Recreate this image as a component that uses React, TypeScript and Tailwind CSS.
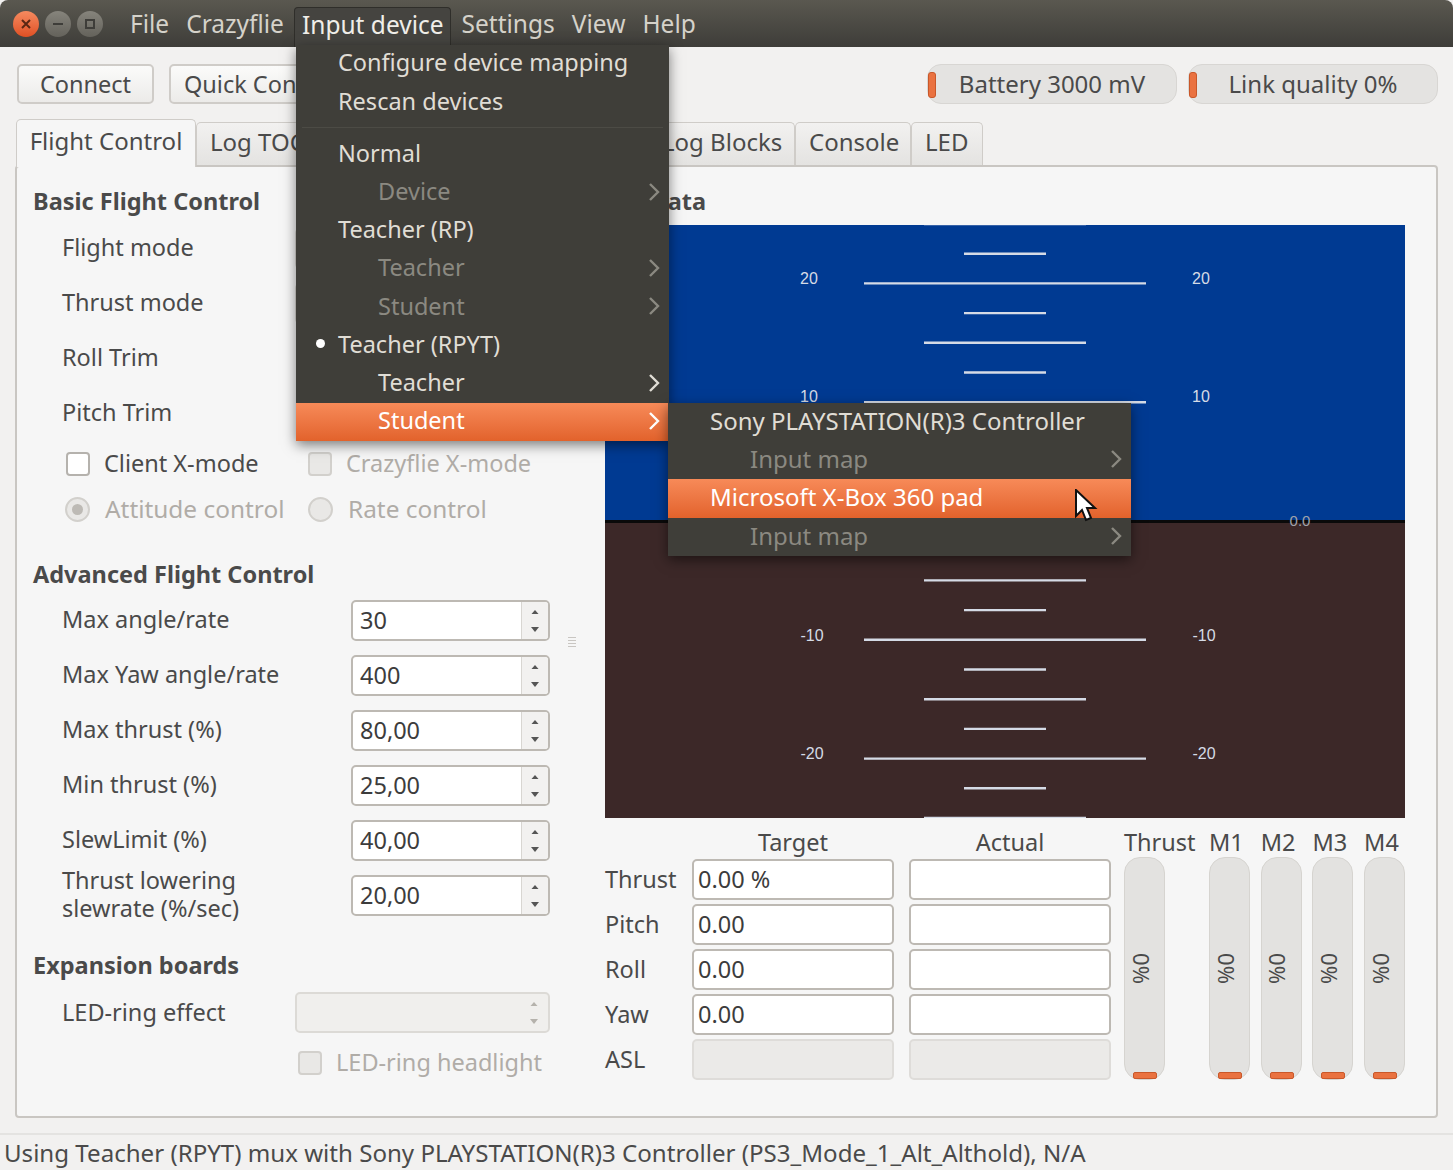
import React from 'react';

const FONT = "font-['Noto_Sans','Open_Sans',sans-serif]";

const Chevron = ({ color = '#d8d5ce' }: { color?: string }) => (
  <svg width="12" height="20" viewBox="0 0 12 20" fill="none">
    <path d="M2 2l8 8-8 8" stroke={color} strokeWidth="2.4" />
  </svg>
);

const SpinArrows = ({ color = '#555' }: { color?: string }) => (
  <svg width="10" height="26" viewBox="0 0 10 26">
    <path d="M5 2l3.5 4h-7z" fill={color} />
    <path d="M1 19h8l-4 5z" fill={color} />
  </svg>
);

const SpinBox = ({ value = '' }: { value?: string }) => (
  <div className="flex h-[41px] w-[199px] rounded-[5px] border-2 border-[#bdb9b3] bg-white overflow-hidden">
    <div className="flex-1 pl-[7px] leading-[36px] text-[#3c3c3c]">{value}</div>
    <div className="flex w-[27px] items-center justify-center border-l border-[#d8d6d2] bg-[#f2f1f0]">
      <SpinArrows />
    </div>
  </div>
);

const Combo = ({ disabled = false }: { disabled?: boolean }) => (
  <div className={`flex h-[41px] w-[255px] items-center justify-end rounded-[5px] border-2 border-[#dcdad6] pr-[9px] ${disabled ? 'bg-[#f0efed]' : 'bg-white'}`}>
    <SpinArrows color="#b5b2ac" />
  </div>
);

const FormRow = ({ label, children }: { label: React.ReactNode; children: React.ReactNode }) => (
  <div className="flex h-[55px] items-center justify-between pl-[29px] text-[#4a4a4a]">
    <div className="pb-[3px] leading-[28px]">{label}</div>
    {children}
  </div>
);

const Heading = ({ children }: { children: React.ReactNode }) => (
  <div className="h-[28px] font-bold leading-[28px] text-[#4a4a4a]">{children}</div>
);

const CheckBox = ({ label, disabled = false }: { label: string; disabled?: boolean }) => (
  <div className={`flex items-center gap-[14px] ${disabled ? 'text-[#b0aca7]' : 'text-[#4a4a4a]'}`}>
    <div className={`h-[24px] w-[24px] rounded-[4px] border-2 ${disabled ? 'border-[#d2d0cc] bg-[#e9e8e6]' : 'border-[#b5b2ad] bg-white'}`} />
    <span>{label}</span>
  </div>
);

const Radio = ({ label, checked = false }: { label: string; checked?: boolean }) => (
  <div className="flex items-center gap-[15px] text-[24.4px] text-[#b0aca7]">
    <div className="flex h-[25px] w-[25px] items-center justify-center rounded-full border-2 border-[#d2d0cc] bg-[#e9e8e6]">
      {checked && <div className="h-[11px] w-[11px] rounded-full bg-[#bdbab5]" />}
    </div>
    <span>{label}</span>
  </div>
);

const Field = ({ value = '', disabled = false }: { value?: string; disabled?: boolean }) => (
  <div className={`h-[41px] rounded-[5px] border-2 pl-[4px] leading-[36px] text-[#3c3c3c] ${disabled ? 'border-[#dedcd9] bg-[#ebeae8]' : 'border-[#bdb9b3] bg-white'}`}>
    {value}
  </div>
);

const MeterBar = () => (
  <div className="relative mt-[2px] flex h-[223px] w-[41px] items-center justify-center rounded-[16px] border border-[#d6d4d0] bg-[#e3e2e0]">
    <span className="-ml-[7px] rotate-90 text-[22px] text-[#4a4a4a]">0%</span>
    <div className="absolute bottom-0 left-[8px] h-[7px] w-[24px] rounded-[2px] border border-[#c9582a] bg-[#ea7240]" />
  </div>
);

const Pill = ({ label, width }: { label: string; width: string }) => (
  <div className={`relative flex h-[40px] items-center justify-center rounded-[14px] border border-[#d8d6d3] bg-[#e4e3e1] text-[24px] text-[#4a4a4a] ${width}`}>
    <div className="absolute left-0 top-[7px] h-[26px] w-[8px] rounded-[3px] border border-[#c9582a] bg-[#ea7240]" />
    <span>{label}</span>
  </div>
);

const Tab = ({ label = '', width, pad = 'pl-[13px]' }: { label?: string; width: string; pad?: string }) => (
  <div className={`h-[43px] rounded-t-[5px] border border-b-0 border-[#cfccc8] bg-gradient-to-b from-[#f2f1f0] to-[#e4e3e1] text-[24px] leading-[38px] text-[#4a4a4a] ${pad} ${width}`}>
    {label}
  </div>
);

const PushButton = ({ label, width }: { label: string; width: string }) => (
  <div className={`h-[40px] rounded-[5px] border-2 border-[#cfccc8] bg-gradient-to-b from-[#fbfbfa] to-[#ecebe9] text-center leading-[36px] text-[#4a4a4a] ${width}`}>
    {label}
  </div>
);

const TopMenu = ({ label, active = false }: { label: string; active?: boolean }) => (
  <div className={`flex h-[40px] items-center rounded-t-[4px] pb-[4px] text-[24.5px] ${active ? 'mx-[2px] border border-b-0 border-[#2f2e2a] bg-[#454440] px-[6.5px] text-[#f0eee9]' : 'px-[8.5px] text-[#d5d2ca]'}`}>
    {label}
  </div>
);

type Item = { label: string; indent?: boolean; disabled?: boolean; arrow?: boolean; bullet?: boolean; selected?: boolean };

const MenuItem = ({ item, pad, nested }: { item: Item; pad: string; nested: string }) => (
  <div
    className={`relative flex h-[38.2px] items-center justify-between pb-[2px] pr-[9px] ${item.indent ? nested : pad} ${
      item.selected
        ? 'bg-gradient-to-b from-[#f78a58] to-[#e2622b] text-white'
        : item.disabled
          ? 'text-[#8b8981]'
          : 'text-[#e0ddd5]'
    }`}
  >
    {item.bullet && <div className="absolute left-[20px] top-[13px] h-[9px] w-[9px] rounded-full bg-white" />}
    <span>{item.label}</span>
    {item.arrow && <Chevron color={item.selected ? '#ffffff' : item.disabled ? '#8b8981' : '#e0ddd5'} />}
  </div>
);

const HUD_CENTER = 400;
const horizon = 296;
const step = 29.7;

const Hud = () => {
  const ticks: React.ReactNode[] = [];
  for (let n = -10; n <= 10; n++) {
    if (n === 0) continue;
    const y = horizon - n * step;
    const half = n % 4 === 0 ? 141 : n % 2 === 0 ? 81 : 41;
    ticks.push(
      <line key={n} x1={HUD_CENTER - half} x2={HUD_CENTER + half} y1={y} y2={y} stroke="#d5dbe6" strokeWidth="2.4" />
    );
  }
  const labels = [
    { t: '20', y: 53, l: 204, r: 596 },
    { t: '10', y: 171, l: 204, r: 596 },
    { t: '-10', y: 410, l: 207, r: 599 },
    { t: '-20', y: 528, l: 207, r: 599 },
  ];
  return (
    <svg width="800" height="593" viewBox="0 0 800 593" className="block">
      <rect width="800" height="297" fill="#003a92" />
      <rect y="297" width="800" height="296" fill="#3c2828" />
      {ticks}
      <rect y="295" width="800" height="3" fill="#0a0a0a" />
      {labels.map((l) => (
        <g key={l.t} fill="#d5dbe6" fontSize="16" fontFamily="'Liberation Sans', sans-serif" textAnchor="middle">
          <text x={l.l} y={l.y + 6}>{l.t}</text>
          <text x={l.r} y={l.y + 6}>{l.t}</text>
        </g>
      ))}
      <text x="695" y="301" fill="#a0a3aa" fontSize="15" fontFamily="'Liberation Sans', sans-serif" textAnchor="middle">0.0</text>
    </svg>
  );
};

const mainItems: Item[] = [
  { label: 'Normal' },
  { label: 'Device', indent: true, disabled: true, arrow: true },
  { label: 'Teacher (RP)' },
  { label: 'Teacher', indent: true, disabled: true, arrow: true },
  { label: 'Student', indent: true, disabled: true, arrow: true },
  { label: 'Teacher (RPYT)', bullet: true },
  { label: 'Teacher', indent: true, arrow: true },
  { label: 'Student', indent: true, arrow: true, selected: true },
];

const subItems: Item[] = [
  { label: 'Sony PLAYSTATION(R)3 Controller' },
  { label: 'Input map', indent: true, disabled: true, arrow: true },
  { label: 'Microsoft X-Box 360 pad', selected: true },
  { label: 'Input map', indent: true, disabled: true, arrow: true },
];

export default function App() {
  return (
    <div className={`relative flex h-[1170px] w-[1453px] flex-col overflow-hidden bg-[#f2f1f0] text-[23.5px] ${FONT}`}>
      {/* title bar */}
      <div className="flex h-[47px] shrink-0 items-center rounded-t-[8px] bg-gradient-to-b from-[#5a5850] to-[#3e3d39] pl-[13px]">
        <div className="flex items-center gap-[6px]">
          <div className="flex h-[26px] w-[26px] items-center justify-center rounded-full bg-gradient-to-b from-[#f58a5f] to-[#df4f22] text-[#5a2613]">
            <svg width="10" height="10" viewBox="0 0 10 10"><path d="M1 1l8 8M9 1l-8 8" stroke="currentColor" strokeWidth="2" /></svg>
          </div>
          <div className="flex h-[26px] w-[26px] items-center justify-center rounded-full bg-gradient-to-b from-[#86847c] to-[#64625b]">
            <div className="h-[2px] w-[10px] bg-[#3e3d39]" />
          </div>
          <div className="flex h-[26px] w-[26px] items-center justify-center rounded-full bg-gradient-to-b from-[#86847c] to-[#64625b]">
            <div className="h-[10px] w-[10px] border-2 border-[#3e3d39]" />
          </div>
        </div>
        <div className="ml-[18.5px] flex items-end pt-[6px]">
          <TopMenu label="File" />
          <TopMenu label="Crazyflie" />
          <TopMenu label="Input device" active />
          <TopMenu label="Settings" />
          <TopMenu label="View" />
          <TopMenu label="Help" />
        </div>
      </div>

      {/* toolbar */}
      <div className="flex h-[72px] shrink-0 items-start justify-between px-[15px] pt-[17px]">
        <div className="flex gap-[15px] pl-[2px]">
          <PushButton label="Connect" width="w-[137px]" />
          <PushButton label="Quick Connect" width="w-[190px]" />
        </div>
        <div className="flex gap-[11px]">
          <Pill label="Battery 3000 mV" width="w-[250px]" />
          <Pill label="Link quality 0%" width="w-[250px]" />
        </div>
      </div>

      {/* tabs */}
      <div className="relative z-10 flex h-[46px] shrink-0 items-end pl-[16px]">
        <div className="-mb-[2px] h-[48px] w-[180px] rounded-t-[5px] border border-b-0 border-[#cfccc8] bg-[#f6f6f6] text-center text-[24px] leading-[42px] text-[#4a4a4a]">
          Flight Control
        </div>
        <Tab label="Log TOC" width="w-[130px]" />
        <Tab width="w-[160px]" />
        <Tab width="w-[151px]" />
        <Tab label="Log Blocks" width="w-[158px]" pad="pl-[24px]" />
        <Tab label="Console" width="w-[116px]" />
        <Tab label="LED" width="w-[72px]" />
      </div>

      {/* main panel */}
      <div className="mx-[15px] flex h-[953px] shrink-0 rounded-[4px] border-2 border-[#c9c6c2] bg-[#f6f6f6] pl-[16px] pt-[20px]">
        <div className="w-[517px]">
          <Heading>Basic Flight Control</Heading>
          <div className="mt-[6px]">
            <FormRow label="Flight mode"><Combo /></FormRow>
            <FormRow label="Thrust mode"><Combo /></FormRow>
            <FormRow label="Roll Trim"><SpinBox /></FormRow>
            <FormRow label="Pitch Trim"><SpinBox /></FormRow>
          </div>
          <div className="flex h-[45px] items-center pl-[33px]">
            <div className="w-[242px]"><CheckBox label="Client X-mode" /></div>
            <CheckBox label="Crazyflie X-mode" disabled />
          </div>
          <div className="flex h-[47px] items-center pl-[32px]">
            <div className="w-[243px]"><Radio label="Attitude control" checked /></div>
            <Radio label="Rate control" />
          </div>
          <div className="mt-[27px]"><Heading>Advanced Flight Control</Heading></div>
          <div className="mt-[5px]">
            <FormRow label="Max angle/rate"><SpinBox value="30" /></FormRow>
            <FormRow label="Max Yaw angle/rate"><SpinBox value="400" /></FormRow>
            <FormRow label="Max thrust (%)"><SpinBox value="80,00" /></FormRow>
            <FormRow label="Min thrust (%)"><SpinBox value="25,00" /></FormRow>
            <FormRow label="SlewLimit (%)"><SpinBox value="40,00" /></FormRow>
            <FormRow label={<>Thrust lowering<br />slewrate (%/sec)</>}><SpinBox value="20,00" /></FormRow>
          </div>
          <div className="mt-[28px]"><Heading>Expansion boards</Heading></div>
          <div className="mt-[13px] flex h-[41px] items-center justify-between pl-[29px] text-[#4a4a4a]">
            <span>LED-ring effect</span>
            <Combo disabled />
          </div>
          <div className="mt-[10px] flex h-[40px] items-center pl-[265px]">
            <CheckBox label="LED-ring headlight" disabled />
          </div>
        </div>

        {/* splitter grip */}
        <div className="w-[55px] pl-[18px] pt-[450px]">
          <div className="flex w-[8px] flex-col gap-[2px]">
            <div className="h-px bg-[#c9c6c2]" />
            <div className="h-px bg-[#c9c6c2]" />
            <div className="h-px bg-[#c9c6c2]" />
            <div className="h-px bg-[#c9c6c2]" />
          </div>
        </div>

        <div className="w-[800px]">
          <div className="flex h-[28px] w-[101px] justify-end whitespace-nowrap font-bold leading-[28px] text-[#4a4a4a]">Flight Data</div>
          <div className="mt-[10px]"><Hud /></div>
          <div className="mt-[11px] flex text-[#4a4a4a]">
            <div className="w-[506px]">
              <div className="grid grid-cols-[87px_202px_15px_202px] items-center gap-y-[4px]">
                <div className="h-[26px]" />
                <div className="h-[26px] text-center leading-[26px]">Target</div>
                <div />
                <div className="h-[26px] text-center leading-[26px]">Actual</div>
                {[
                  { name: 'Thrust', value: '0.00 %' },
                  { name: 'Pitch', value: '0.00' },
                  { name: 'Roll', value: '0.00' },
                  { name: 'Yaw', value: '0.00' },
                ].map((r) => (
                  <React.Fragment key={r.name}>
                    <div>{r.name}</div>
                    <Field value={r.value} />
                    <div />
                    <Field />
                  </React.Fragment>
                ))}
                <div>ASL</div>
                <Field disabled />
                <div />
                <Field disabled />
              </div>
            </div>
            <div className="ml-[13px] flex">
              <div className="w-[85px]">
                <div className="h-[26px] whitespace-nowrap leading-[26px]">Thrust</div>
                <MeterBar />
              </div>
              {['M1', 'M2', 'M3', 'M4'].map((m) => (
                <div key={m} className="w-[51.7px]">
                  <div className="h-[26px] leading-[26px]">{m}</div>
                  <MeterBar />
                </div>
              ))}
            </div>
          </div>
        </div>
      </div>

      {/* status bar */}
      <div className="mt-[15px] flex-1 border-t-2 border-[#e4e3e1] pl-[4px] text-[24.1px] leading-[36px] text-[#4a4a4a] whitespace-nowrap">
        Using Teacher (RPYT) mux with Sony PLAYSTATION(R)3 Controller (PS3_Mode_1_Alt_Althold), N/A
      </div>

      {/* open menu */}
      <div className="absolute left-[296px] top-[45px] z-20 w-[373px] bg-[#3f3e39] shadow-[0_4px_12px_rgba(0,0,0,0.5)]">
        <div>
          <MenuItem item={{ label: 'Configure device mapping' }} pad="pl-[42px]" nested="pl-[82px]" />
          <MenuItem item={{ label: 'Rescan devices' }} pad="pl-[42px]" nested="pl-[82px]" />
        </div>
        <div className="mx-[6px] my-[6px] h-px bg-[#4c4b45]" />
        <div className="pt-[1px]">
          {mainItems.map((it, i) => (
            <MenuItem key={i} item={it} pad="pl-[42px]" nested="pl-[82px]" />
          ))}
        </div>
      </div>

      {/* submenu */}
      <div className="absolute left-[668px] top-[403px] z-30 w-[463px] bg-[#3f3e39] text-[24px] shadow-[0_4px_12px_rgba(0,0,0,0.5)]">
        {subItems.map((it, i) => (
          <MenuItem key={i} item={it} pad="pl-[42px]" nested="pl-[82px]" />
        ))}
      </div>

      {/* mouse cursor */}
      <svg className="absolute left-[1074px] top-[489px] z-40" width="24" height="34" viewBox="0 0 24 34">
        <path d="M2 1v26l6-6 4 10 5-2-4-10h8z" fill="#fff" stroke="#111" strokeWidth="2" />
      </svg>
    </div>
  );
}
